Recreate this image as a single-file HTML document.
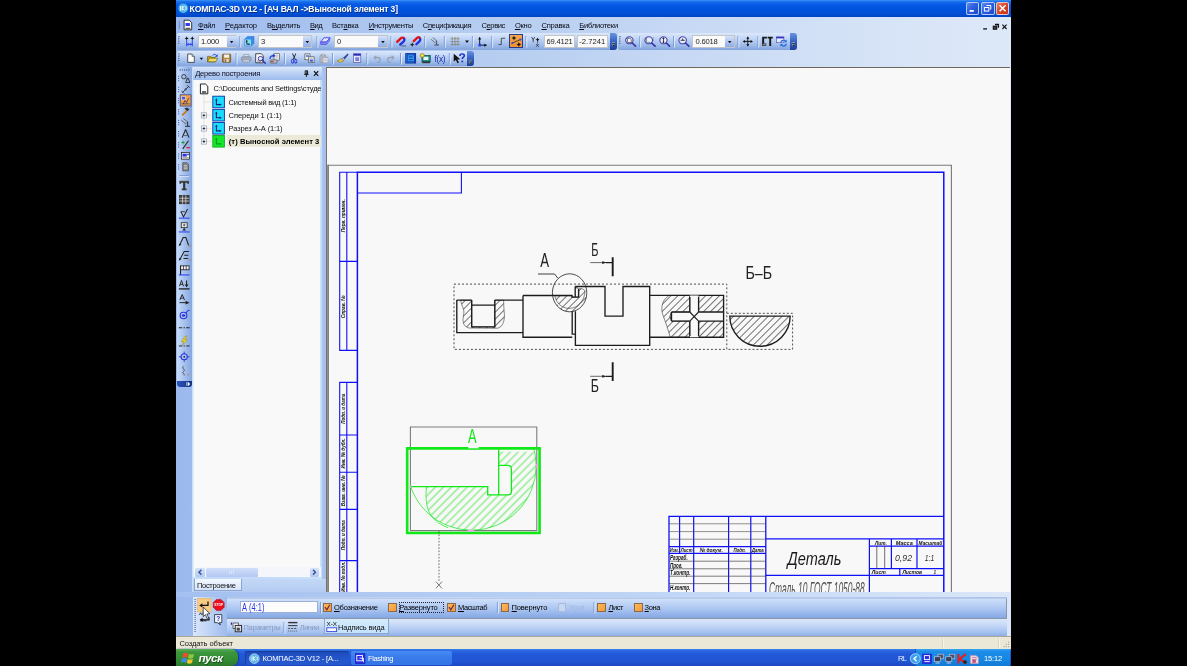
<!DOCTYPE html>
<html lang="ru"><head><meta charset="utf-8"><title>КОМПАС-3D V12</title><style>
html,body{margin:0;padding:0;background:#000;}
body{width:1187px;height:666px;overflow:hidden;position:relative;font-family:'Liberation Sans',sans-serif;}
.t{position:absolute;white-space:pre;font-family:'Liberation Sans',sans-serif;}
.t u{text-decoration:underline;text-decoration-thickness:0.7px;text-underline-offset:0.6px;}
svg text{font-family:'Liberation Sans',sans-serif;}
#win{position:absolute;left:0;top:0;width:1187px;height:666px;overflow:hidden;filter:blur(0.35px);}
</style></head>
<body><div id="win">
<div style="position:absolute;left:175.50px;top:0.00px;width:835.00px;height:666.00px;background:linear-gradient(90deg,#9cb9ee 0%,#a6c1ef 12%,#b4ccf0 35%,#c6d8f4 60%,#d7e4f7 85%,#dde8f8 100%);"></div>
<div style="position:absolute;left:175.50px;top:0.00px;width:835.00px;height:17.00px;background:linear-gradient(180deg,#3b94f8 0%,#1a6eec 10%,#0458e2 28%,#0053dc 55%,#0150d6 80%,#0144c2 100%);"></div>
<svg style="position:absolute;left:178.00px;top:3.00px;overflow:visible;" width="10.50" height="10.50" viewBox="178.00 3.00 10.50 10.50"><circle cx="183.2" cy="8.3" r="5" fill="#4ab4e8" stroke="#1c6fd0" stroke-width="0.6"/><path d="M180.6 6v4.6M182.2 6v4.6M184.4 5.8l-2 2.4 2.2 2.4M186 6.2v4" stroke="#fff" stroke-width="0.9" fill="none"/></svg>
<span class="t" style="left:189.60px;top:3.74px;font-size:8.6px;line-height:10.32px;letter-spacing:-0.119px;color:#fff;font-weight:bold;text-shadow:0.6px 0.6px 0.5px #0a2a80;">КОМПАС-3D V12 - [АЧ ВАЛ -&gt;Выносной элемент 3]</span>
<div style="position:absolute;left:966.20px;top:2.20px;width:13.20px;height:12.60px;background:linear-gradient(135deg,#5b8cf0 0%,#2d5fe0 45%,#1c48c8 100%);border:0.8px solid rgba(235,242,255,0.72);border-radius:2px;box-sizing:border-box;"></div><svg style="position:absolute;left:966.20px;top:2.20px;overflow:visible;" width="13.20" height="12.60" viewBox="966.20 2.20 13.20 12.60"><path d="M969.8000000000001 11.1h4.2" stroke="#fff" stroke-width="1.8"/></svg>
<div style="position:absolute;left:981.40px;top:2.20px;width:13.20px;height:12.60px;background:linear-gradient(135deg,#5b8cf0 0%,#2d5fe0 45%,#1c48c8 100%);border:0.8px solid rgba(235,242,255,0.72);border-radius:2px;box-sizing:border-box;"></div><svg style="position:absolute;left:981.40px;top:2.20px;overflow:visible;" width="13.20" height="12.60" viewBox="981.40 2.20 13.20 12.60"><path d="M986.8 5.7h4.4v3.6h-1" stroke="#fff" stroke-width="1" fill="none"/><rect x="984.8" y="7.7" width="4.4" height="3.6" stroke="#fff" stroke-width="1" fill="none"/></svg>
<div style="position:absolute;left:996.20px;top:2.20px;width:13.20px;height:12.60px;background:linear-gradient(135deg,#e8866a 0%,#d9482a 45%,#c4300f 100%);border:0.8px solid rgba(235,242,255,0.72);border-radius:2px;box-sizing:border-box;"></div><svg style="position:absolute;left:996.20px;top:2.20px;overflow:visible;" width="13.20" height="12.60" viewBox="996.20 2.20 13.20 12.60"><path d="M999.8000000000001 5.5l6 6M1005.8000000000001 5.5l-6 6" stroke="#fff" stroke-width="1.5"/></svg>
<svg style="position:absolute;left:175.50px;top:17.00px;overflow:visible;" width="20.50" height="16.00" viewBox="175.50 17.00 20.50 16.00"><rect x="178.3" y="21.5" width="1" height="1" fill="#3a5a9a"/><rect x="178.3" y="23.5" width="1" height="1" fill="#3a5a9a"/><rect x="178.3" y="25.5" width="1" height="1" fill="#3a5a9a"/><rect x="178.3" y="27.5" width="1" height="1" fill="#3a5a9a"/><path d="M183.6 20.2h5l2.6 2.4v7.2h-7.6z" fill="#fdfdfd" stroke="#222" stroke-width="0.9"/><rect x="185" y="23" width="4.4" height="3" fill="#2c3ff0"/><path d="M185 28.3h4.8" stroke="#333" stroke-width="1"/></svg>
<span class="t" style="left:198.00px;top:20.64px;font-size:7.6px;line-height:9.12px;letter-spacing:-0.393px;color:#0a0a14;"><u>Ф</u>айл</span>
<span class="t" style="left:225.10px;top:20.64px;font-size:7.6px;line-height:9.12px;letter-spacing:-0.100px;color:#0a0a14;"><u>Р</u>едактор</span>
<span class="t" style="left:267.00px;top:20.64px;font-size:7.6px;line-height:9.12px;letter-spacing:-0.243px;color:#0a0a14;">В<u>ы</u>делить</span>
<span class="t" style="left:310.10px;top:20.64px;font-size:7.6px;line-height:9.12px;letter-spacing:-0.550px;color:#0a0a14;"><u>В</u>ид</span>
<span class="t" style="left:331.90px;top:20.64px;font-size:7.6px;line-height:9.12px;letter-spacing:-0.233px;color:#0a0a14;">Вст<u>а</u>вка</span>
<span class="t" style="left:368.80px;top:20.64px;font-size:7.6px;line-height:9.12px;letter-spacing:-0.278px;color:#0a0a14;"><u>И</u>нструменты</span>
<span class="t" style="left:422.80px;top:20.64px;font-size:7.6px;line-height:9.12px;letter-spacing:-0.419px;color:#0a0a14;">С<u>п</u>ецификация</span>
<span class="t" style="left:481.50px;top:20.64px;font-size:7.6px;line-height:9.12px;letter-spacing:-0.436px;color:#0a0a14;">С<u>е</u>рвис</span>
<span class="t" style="left:514.90px;top:20.64px;font-size:7.6px;line-height:9.12px;letter-spacing:-0.264px;color:#0a0a14;"><u>О</u>кно</span>
<span class="t" style="left:541.50px;top:20.64px;font-size:7.6px;line-height:9.12px;letter-spacing:-0.257px;color:#0a0a14;"><u>С</u>правка</span>
<span class="t" style="left:579.30px;top:20.64px;font-size:7.6px;line-height:9.12px;letter-spacing:-0.256px;color:#0a0a14;"><u>Б</u>иблиотеки</span>
<svg style="position:absolute;left:985.00px;top:19.00px;overflow:visible;" width="25.00" height="13.00" viewBox="985.00 19.00 25.00 13.00"><path d="M983.2 28.9h3.8" stroke="#111" stroke-width="1.3"/><path d="M995 24.5h3.400v3.200" stroke="#111" stroke-width="1.300" fill="none"/><rect x="993.300" y="26.200" width="3.400" height="3" fill="#444" stroke="#111" stroke-width="1.100"/><path d="M1002.4 24.6l4.2 4.4M1006.6 24.6l-4.2 4.4" stroke="#111" stroke-width="1.1"/></svg>
<div style="position:absolute;left:176.50px;top:33.40px;width:440.10px;height:16.40px;background:linear-gradient(180deg,#dce8fb 0%,#c3d7f6 30%,#a4c0ec 65%,#83a4dc 100%);border-radius:2px 3px 3px 2px;"></div><div style="position:absolute;left:609.60px;top:33.40px;width:7.00px;height:16.40px;background:linear-gradient(180deg,#6a94e0 0%,#3a66c4 45%,#1c3f9a 100%);border-radius:0 3px 3px 0;"></div><svg style="position:absolute;left:609.60px;top:33.40px;overflow:visible;" width="7.00" height="16.40" viewBox="609.60 33.40 7.00 16.40"><path d="M611.4 43.39999999999999h3.2" stroke="#fff" stroke-width="0.800"/><path d="M611.2 44.8h3.600l-1.800 2.200z" fill="#fff"/><path d="M611.6 43.8h3.200" stroke="#111" stroke-width="0.700"/><path d="M611.8 45.199999999999996h3.000l-1.500 1.900z" fill="#111"/></svg>
<div style="position:absolute;left:617.80px;top:33.40px;width:179.50px;height:16.40px;background:linear-gradient(180deg,#dce8fb 0%,#c3d7f6 30%,#a4c0ec 65%,#83a4dc 100%);border-radius:2px 3px 3px 2px;"></div><div style="position:absolute;left:790.30px;top:33.40px;width:7.00px;height:16.40px;background:linear-gradient(180deg,#6a94e0 0%,#3a66c4 45%,#1c3f9a 100%);border-radius:0 3px 3px 0;"></div><svg style="position:absolute;left:790.30px;top:33.40px;overflow:visible;" width="7.00" height="16.40" viewBox="790.30 33.40 7.00 16.40"><path d="M792.0999999999999 43.39999999999999h3.2" stroke="#fff" stroke-width="0.800"/><path d="M791.9 44.8h3.600l-1.800 2.200z" fill="#fff"/><path d="M792.3 43.8h3.200" stroke="#111" stroke-width="0.700"/><path d="M792.4999999999999 45.199999999999996h3.000l-1.500 1.900z" fill="#111"/></svg>
<div style="position:absolute;left:509.30px;top:34.40px;width:14.20px;height:13.80px;background:linear-gradient(180deg,#f6a84c,#f09a3c 60%,#ee9232);border:0.8px solid #2a3a8a;box-sizing:border-box;"></div>
<svg style="position:absolute;left:176.00px;top:33.00px;overflow:visible;" width="624.00" height="17.00" viewBox="176.00 33.00 624.00 17.00"><rect x="178.40" y="36.20" width="1.300" height="1.300" fill="#27408a"/><rect x="179.10" y="36.90" width="1" height="1" fill="#f4f8ff" opacity="0.800"/><rect x="178.40" y="38.40" width="1.300" height="1.300" fill="#27408a"/><rect x="179.10" y="39.10" width="1" height="1" fill="#f4f8ff" opacity="0.800"/><rect x="178.40" y="40.60" width="1.300" height="1.300" fill="#27408a"/><rect x="179.10" y="41.30" width="1" height="1" fill="#f4f8ff" opacity="0.800"/><rect x="178.40" y="42.80" width="1.300" height="1.300" fill="#27408a"/><rect x="179.10" y="43.50" width="1" height="1" fill="#f4f8ff" opacity="0.800"/><rect x="619.40" y="36.20" width="1.300" height="1.300" fill="#27408a"/><rect x="620.10" y="36.90" width="1" height="1" fill="#f4f8ff" opacity="0.800"/><rect x="619.40" y="38.40" width="1.300" height="1.300" fill="#27408a"/><rect x="620.10" y="39.10" width="1" height="1" fill="#f4f8ff" opacity="0.800"/><rect x="619.40" y="40.60" width="1.300" height="1.300" fill="#27408a"/><rect x="620.10" y="41.30" width="1" height="1" fill="#f4f8ff" opacity="0.800"/><rect x="619.40" y="42.80" width="1.300" height="1.300" fill="#27408a"/><rect x="620.10" y="43.50" width="1" height="1" fill="#f4f8ff" opacity="0.800"/><path d="M239.90 36V47" stroke="#6f8fcf" stroke-width="0.900"/><path d="M240.80 36.6V47.6" stroke="#f2f6fe" stroke-width="0.800"/><path d="M317.00 36V47" stroke="#6f8fcf" stroke-width="0.900"/><path d="M317.90 36.6V47.6" stroke="#f2f6fe" stroke-width="0.800"/><path d="M391.00 36V47" stroke="#6f8fcf" stroke-width="0.900"/><path d="M391.90 36.6V47.6" stroke="#f2f6fe" stroke-width="0.800"/><path d="M424.80 36V47" stroke="#6f8fcf" stroke-width="0.900"/><path d="M425.70 36.6V47.6" stroke="#f2f6fe" stroke-width="0.800"/><path d="M444.40 36V47" stroke="#6f8fcf" stroke-width="0.900"/><path d="M445.30 36.6V47.6" stroke="#f2f6fe" stroke-width="0.800"/><path d="M472.40 36V47" stroke="#6f8fcf" stroke-width="0.900"/><path d="M473.30 36.6V47.6" stroke="#f2f6fe" stroke-width="0.800"/><path d="M491.80 36V47" stroke="#6f8fcf" stroke-width="0.900"/><path d="M492.70 36.6V47.6" stroke="#f2f6fe" stroke-width="0.800"/><path d="M525.90 36V47" stroke="#6f8fcf" stroke-width="0.900"/><path d="M526.80 36.6V47.6" stroke="#f2f6fe" stroke-width="0.800"/><path d="M639.80 36V47" stroke="#6f8fcf" stroke-width="0.900"/><path d="M640.70 36.6V47.6" stroke="#f2f6fe" stroke-width="0.800"/><path d="M673.50 36V47" stroke="#6f8fcf" stroke-width="0.900"/><path d="M674.40 36.6V47.6" stroke="#f2f6fe" stroke-width="0.800"/><path d="M738.00 36V47" stroke="#6f8fcf" stroke-width="0.900"/><path d="M738.90 36.6V47.6" stroke="#f2f6fe" stroke-width="0.800"/><path d="M757.90 36V47" stroke="#6f8fcf" stroke-width="0.900"/><path d="M758.80 36.6V47.6" stroke="#f2f6fe" stroke-width="0.800"/><g transform="translate(184.50 36.20) scale(0.6250 0.6500)"><path d="M3.5 0.0L4.52 2.38L6.9 3.4L4.52 4.42L3.5 6.8L2.48 4.42L0.10000000000000009 3.4L2.48 2.38z" fill="#111"/><path d="M12.5 0.0L13.52 2.38L15.9 3.4L13.52 4.42L12.5 6.8L11.48 4.42L9.1 3.4L11.48 2.38z" fill="#111"/><path d="M3.500 6v9.500M12.500 6v9.500" stroke="#2a3cf0" stroke-width="1.500"/><path d="M3.500 12.500h9" stroke="#2a3cf0" stroke-width="1.500"/><path d="M4 12.500l2.600-2.200v4.400zM12 12.500l-2.600-2.200v4.400z" fill="#2a3cf0"/></g><g transform="translate(244.20 35.80) scale(0.6500 0.6750)"><path d="M1 5l4-4h10v10l-4 4H1z" fill="#3f8ff0" stroke="#2a68d8" stroke-width="0.8"/><path d="M1 5h10v10M11 5l4-4" stroke="#2f6fc4" stroke-width="0.8" fill="none"/><rect x="1.4" y="5.4" width="9.2" height="9.2" fill="#7fe0f0"/><path d="M4 7v5.4h3.4" stroke="#111" stroke-width="1.3" fill="none"/><path d="M2.6 8.6L4 6.2l1.4 2.4zM7 11l2.4 1.4L7 13.8z" fill="#111"/></g><g transform="translate(320.20 36.60) scale(0.6250 0.5750)"><path d="M0.800 9.500l5.200-7.500h9.400l-5.200 7.500z" fill="#e4e6fb" stroke="#3a3ae8" stroke-width="1.400"/><path d="M0.800 9.500v4h9.400l5.200-7.500v-4l-5.200 7.500z" fill="#6a6af0" stroke="#3a3ae8" stroke-width="1.200"/><path d="M0.800 11.500h9.400l5.200-7.500" stroke="#c8c8fa" stroke-width="0.800" fill="none"/></g><g transform="translate(395.60 36.20) scale(0.6750 0.6500)"><path d="M2.200 8.600L8 3a3.200 3.200 0 0 1 4.600 0.400" stroke="#e41414" stroke-width="3.600" stroke-linecap="round" fill="none"/><path d="M12.800 4.400a3.200 3.200 0 0 1-0.600 3.400L6.800 12.800" stroke="#1c34e0" stroke-width="3.600" stroke-linecap="round" fill="none"/><path d="M9 15h6.600" stroke="#333" stroke-width="1.400" stroke-dasharray="1.600 0.700"/></g><g transform="translate(410.40 36.20) scale(0.6500 0.6500)"><path d="M5.200 7.600L10.600 2.400a3.200 3.200 0 0 1 4.200 0.600" stroke="#e41414" stroke-width="3.600" stroke-linecap="round" fill="none"/><path d="M15 4.200a3.200 3.200 0 0 1-0.800 3.400L9.200 12.400" stroke="#1c34e0" stroke-width="3.600" stroke-linecap="round" fill="none"/><path d="M2.8 10.2L3.6399999999999997 12.16L5.6 13L3.6399999999999997 13.84L2.8 15.8L1.96 13.84L0.0 13L1.96 12.16z" fill="#222"/><path d="M2.800 9.800v6.400M-0.400 13h6.400" stroke="#222" stroke-width="0.900"/></g><g transform="translate(430.60 37.00) scale(0.5250 0.5500)"><path d="M0.500 4l8 6.500M4 1l8 6.500" stroke="#555" stroke-width="1.400"/><path d="M11.600 7.500v7M9.800 9.200l1.800-1.700M7 14.600h9" stroke="#333" stroke-width="1.500" fill="none"/></g><g transform="translate(450.60 37.00) scale(0.5625 0.5625)"><path d="M3 0v16M8 0v16M13 0v16M0 3h16M0 8h16M0 13h16" stroke="#7a7250" stroke-width="1.300" stroke-dasharray="2.200 0.800"/></g><path d="M465 40.6h4l-2 2.400z" fill="#111"/><g transform="translate(477.20 36.40) scale(0.6125 0.6250)"><path d="M4 15V2M4 14h11" stroke="#111" stroke-width="1.500" fill="none"/><path d="M1.600 5L4 0.500 6.400 5zM11.500 11.600L16 14l-4.500 2.400z" fill="#111"/><rect x="2" y="11.800" width="4.200" height="4.200" fill="#2a3cf0"/></g><g transform="translate(498.00 37.20) scale(0.4750 0.5250)"><path d="M1 14h6V2h8" stroke="#333" stroke-width="1.600" fill="none"/></g></svg>
<div style="position:absolute;left:197.60px;top:35.30px;width:38.80px;height:12.70px;background:#fafafa;border:0.8px solid #c3c6c8;box-sizing:border-box;"></div><div style="position:absolute;left:226.60px;top:36.10px;width:9.00px;height:11.10px;background:linear-gradient(180deg,#d4e2fa,#a9c2ee 60%,#8daee6);"></div><svg style="position:absolute;left:226.60px;top:35.30px;overflow:visible;" width="9.80" height="12.70" viewBox="226.60 35.30 9.80 12.70"><path d="M229.40 41.25h3.600l-1.800 2.200z" fill="#111"/></svg><span class="t" style="left:201.00px;top:37.29px;font-size:7.6px;line-height:9.12px;letter-spacing:-0.203px;color:#222;">1.000</span>
<div style="position:absolute;left:257.60px;top:35.30px;width:54.20px;height:12.70px;background:#fafafa;border:0.8px solid #c3c6c8;box-sizing:border-box;"></div><div style="position:absolute;left:302.60px;top:36.10px;width:8.40px;height:11.10px;background:linear-gradient(180deg,#d4e2fa,#a9c2ee 60%,#8daee6);"></div><svg style="position:absolute;left:302.60px;top:35.30px;overflow:visible;" width="9.20" height="12.70" viewBox="302.60 35.30 9.20 12.70"><path d="M305.10 41.25h3.600l-1.800 2.200z" fill="#111"/></svg><span class="t" style="left:261.00px;top:37.29px;font-size:7.6px;line-height:9.12px;letter-spacing:-0.234px;color:#222;">3</span>
<div style="position:absolute;left:333.50px;top:35.30px;width:54.50px;height:12.70px;background:#fafafa;border:0.8px solid #c3c6c8;box-sizing:border-box;"></div><div style="position:absolute;left:377.50px;top:36.10px;width:9.70px;height:11.10px;background:linear-gradient(180deg,#d4e2fa,#a9c2ee 60%,#8daee6);"></div><svg style="position:absolute;left:377.50px;top:35.30px;overflow:visible;" width="10.50" height="12.70" viewBox="377.50 35.30 10.50 12.70"><path d="M380.65 41.25h3.600l-1.800 2.200z" fill="#111"/></svg><span class="t" style="left:337.00px;top:37.29px;font-size:7.6px;line-height:9.12px;letter-spacing:-0.234px;color:#222;">0</span>
<div style="position:absolute;left:543.90px;top:35.30px;width:31.00px;height:12.70px;background:#fafafa;border:0.8px solid #c3c6c8;box-sizing:border-box;"></div><span class="t" style="left:546.60px;top:37.29px;font-size:7.6px;line-height:9.12px;letter-spacing:-0.236px;color:#222;">69.4121</span>
<div style="position:absolute;left:576.80px;top:35.30px;width:31.00px;height:12.70px;background:#fafafa;border:0.8px solid #c3c6c8;box-sizing:border-box;"></div><span class="t" style="left:579.20px;top:37.29px;font-size:7.6px;line-height:9.12px;letter-spacing:0.033px;color:#222;">-2.7241</span>
<div style="position:absolute;left:692.00px;top:35.30px;width:42.80px;height:12.70px;background:#fafafa;border:0.8px solid #c3c6c8;box-sizing:border-box;"></div><div style="position:absolute;left:724.80px;top:36.10px;width:9.20px;height:11.10px;background:linear-gradient(180deg,#d4e2fa,#a9c2ee 60%,#8daee6);"></div><svg style="position:absolute;left:724.80px;top:35.30px;overflow:visible;" width="10.00" height="12.70" viewBox="724.80 35.30 10.00 12.70"><path d="M727.70 41.25h3.600l-1.800 2.200z" fill="#111"/></svg><span class="t" style="left:695.40px;top:37.29px;font-size:7.6px;line-height:9.12px;letter-spacing:-0.172px;color:#222;">0.6018</span>
<svg style="position:absolute;left:176.00px;top:33.00px;overflow:visible;" width="624.00" height="17.00" viewBox="176.00 33.00 624.00 17.00"><g transform="translate(510.80 35.60) scale(0.7000 0.7125)"><path d="M4.5 0.10000000000000009L5.52 2.48L7.9 3.5L5.52 4.52L4.5 6.9L3.48 4.52L1.1 3.5L3.48 2.48z" fill="#111"/><path d="M11.5 9.1L12.52 11.48L14.9 12.5L12.52 13.52L11.5 15.9L10.48 13.52L8.1 12.5L10.48 11.48z" fill="#111"/><path d="M1 11L15 5" stroke="#222" stroke-width="1.100"/><circle cx="2.400" cy="10.400" r="1.500" fill="#3a44e8"/><circle cx="13.600" cy="5.600" r="1.500" fill="#3a44e8"/></g><g transform="translate(531.00 36.40) scale(0.6000 0.6500)"><path d="M1 1l2.600 4L6.200 1M3.600 5v4" stroke="#222" stroke-width="1.200" fill="none"/><path d="M11 1.6L12.02 3.98L14.4 5L12.02 6.02L11 8.4L9.98 6.02L7.6 5L9.98 3.98z" fill="#111"/><path d="M11 5v6" stroke="#222" stroke-width="1"/><path d="M8.500 11.500l4.500 4.500M13 11.500l-4.500 4.500" stroke="#222" stroke-width="1.200"/></g><g transform="translate(624.80 36.00) scale(0.7125 0.6750)"><circle cx="6.4" cy="6.4" r="5.2" fill="#e8eef8" stroke="#4a44b0" stroke-width="1.6"/><path d="M4 3.400h3.400l1.600 1.600v4.600H4z" fill="#fff" stroke="#222" stroke-width="0.900"/><path d="M10.4 10.4L15 15" stroke="#3a34a8" stroke-width="2.4" stroke-linecap="round"/></g><g transform="translate(644.00 36.00) scale(0.7375 0.6750)"><circle cx="6.4" cy="6.4" r="5.2" fill="#e8eef8" stroke="#4a44b0" stroke-width="1.6"/><path d="M3.400 3v6.400h5" stroke="#5a8a8a" stroke-width="1.200" fill="none"/><path d="M10.4 10.4L15 15" stroke="#3a34a8" stroke-width="2.4" stroke-linecap="round"/><path d="M13 2v6" stroke="#888" stroke-width="1.200" stroke-dasharray="1.200 1"/></g><g transform="translate(659.00 36.00) scale(0.7000 0.6750)"><circle cx="6.4" cy="6.4" r="5.2" fill="#e8eef8" stroke="#4a44b0" stroke-width="1.6"/><path d="M6.400 2.600v7.600" stroke="#222" stroke-width="1.200"/><path d="M4.600 4.400L6.400 2l1.800 2.400zM4.600 8.400L6.400 10.800l1.800-2.400z" fill="#222"/><path d="M10.4 10.4L15 15" stroke="#3a34a8" stroke-width="2.4" stroke-linecap="round"/></g><g transform="translate(678.00 36.00) scale(0.7250 0.6750)"><circle cx="6.4" cy="6.4" r="5.2" fill="#e8eef8" stroke="#4a44b0" stroke-width="1.6"/><path d="M3.600 6.400h5.600" stroke="#222" stroke-width="1.300"/><path d="M5.200 5.400L6.400 3.400l1.200 2z" fill="#222"/><path d="M10.4 10.4L15 15" stroke="#3a34a8" stroke-width="2.4" stroke-linecap="round"/></g><g transform="translate(742.80 36.40) scale(0.6250 0.6250)"><path d="M8 1v14M1 8h14" stroke="#111" stroke-width="1.500"/><path d="M5.600 3.600L8 0l2.400 3.600zM5.600 12.400L8 16l2.400-3.600zM3.600 5.600L0 8l3.600 2.400zM12.400 5.600L16 8l-3.600 2.400z" fill="#111"/></g><g transform="translate(761.80 36.20) scale(0.6875 0.6500)"><path d="M0.500 1h7v2.400H3.400V15H0.500zM8.500 1H16v2.400h-2.400V15h-2.800V3.400H8.500z" fill="#1a1a1a"/><rect x="0.500" y="11" width="6" height="4" fill="#444"/><path d="M1.500 13h4" stroke="#ddd" stroke-width="0.800"/></g><g transform="translate(776.00 36.20) scale(0.6875 0.6500)"><rect x="0.500" y="1" width="11" height="9" fill="#e8ecfa" stroke="#5a5ac8" stroke-width="1"/><rect x="0.500" y="1" width="11" height="2.400" fill="#3434b8"/><path d="M7 10a4 4 0 0 1 7-2.400" stroke="#1c6ae0" stroke-width="1.800" fill="none"/><path d="M15.600 5.400v4h-4z" fill="#1c6ae0"/><path d="M15 11.400a4 4 0 0 1-7 2.400" stroke="#1c6ae0" stroke-width="1.800" fill="none"/><path d="M6.400 16v-4h4z" fill="#1c6ae0"/></g></svg>
<div style="position:absolute;left:176.50px;top:50.60px;width:297.50px;height:15.80px;background:linear-gradient(180deg,#dce8fb 0%,#c3d7f6 30%,#a4c0ec 65%,#83a4dc 100%);border-radius:2px 3px 3px 2px;"></div><div style="position:absolute;left:467.00px;top:50.60px;width:7.00px;height:15.80px;background:linear-gradient(180deg,#6a94e0 0%,#3a66c4 45%,#1c3f9a 100%);border-radius:0 3px 3px 0;"></div><svg style="position:absolute;left:467.00px;top:50.60px;overflow:visible;" width="7.00" height="15.80" viewBox="467.00 50.60 7.00 15.80"><path d="M468.79999999999995 60.0h3.2" stroke="#fff" stroke-width="0.800"/><path d="M468.59999999999997 61.400000000000006h3.600l-1.800 2.200z" fill="#fff"/><path d="M469.0 60.400000000000006h3.200" stroke="#111" stroke-width="0.700"/><path d="M469.2 61.800000000000004h3.000l-1.500 1.900z" fill="#111"/></svg>
<svg style="position:absolute;left:176.00px;top:50.00px;overflow:visible;" width="304.00" height="17.00" viewBox="176.00 50.00 304.00 17.00"><rect x="178.40" y="53.40" width="1.300" height="1.300" fill="#27408a"/><rect x="179.10" y="54.10" width="1" height="1" fill="#f4f8ff" opacity="0.800"/><rect x="178.40" y="55.60" width="1.300" height="1.300" fill="#27408a"/><rect x="179.10" y="56.30" width="1" height="1" fill="#f4f8ff" opacity="0.800"/><rect x="178.40" y="57.80" width="1.300" height="1.300" fill="#27408a"/><rect x="179.10" y="58.50" width="1" height="1" fill="#f4f8ff" opacity="0.800"/><rect x="178.40" y="60.00" width="1.300" height="1.300" fill="#27408a"/><rect x="179.10" y="60.70" width="1" height="1" fill="#f4f8ff" opacity="0.800"/><path d="M236.10 53V64" stroke="#6f8fcf" stroke-width="0.900"/><path d="M237.00 53.6V64.6" stroke="#f2f6fe" stroke-width="0.800"/><path d="M284.50 53V64" stroke="#6f8fcf" stroke-width="0.900"/><path d="M285.40 53.6V64.6" stroke="#f2f6fe" stroke-width="0.800"/><path d="M332.50 53V64" stroke="#6f8fcf" stroke-width="0.900"/><path d="M333.40 53.6V64.6" stroke="#f2f6fe" stroke-width="0.800"/><path d="M366.90 53V64" stroke="#6f8fcf" stroke-width="0.900"/><path d="M367.80 53.6V64.6" stroke="#f2f6fe" stroke-width="0.800"/><path d="M400.60 53V64" stroke="#6f8fcf" stroke-width="0.900"/><path d="M401.50 53.6V64.6" stroke="#f2f6fe" stroke-width="0.800"/><path d="M449.40 53V64" stroke="#6f8fcf" stroke-width="0.900"/><path d="M450.30 53.6V64.6" stroke="#f2f6fe" stroke-width="0.800"/><g transform="translate(186.60 53.60) scale(0.5500 0.5750)"><path d="M2 0.800h8l4 4V15.200H2z" fill="#fdfdfd" stroke="#222" stroke-width="1.300"/><path d="M10 0.800v4h4" fill="#ddd" stroke="#222" stroke-width="1"/></g><path d="M199.600 57.800h3.600l-1.800 2.200z" fill="#111"/><g transform="translate(207.20 53.40) scale(0.6625 0.6000)"><path d="M0.500 5h5l1.200 1.600H12V14H0.500z" fill="#c8a820" stroke="#5a4a08" stroke-width="0.900"/><path d="M0.500 14l3-6H16l-3.400 6z" fill="#f4dc60" stroke="#5a4a08" stroke-width="0.900"/><path d="M8 3.400c2-2.400 4.600-2.400 6 0" stroke="#1c3cd8" stroke-width="1.500" fill="none"/><path d="M15.600 1v4.400h-4z" fill="#1c3cd8"/></g><g transform="translate(222.00 53.60) scale(0.5750 0.5750)"><rect x="1" y="1" width="14" height="14" rx="1" fill="#b88a3c" stroke="#5a3c10" stroke-width="1.200"/><rect x="3.600" y="1.600" width="8.800" height="5.600" fill="#f4f0e6"/><rect x="4.400" y="9.600" width="7.200" height="5" fill="#e4dccc"/><rect x="5.400" y="10.600" width="2" height="3.400" fill="#5a3c10"/></g><g transform="translate(241.00 53.60) scale(0.6625 0.5875)"><path d="M4 1.500h8v4H4z" fill="#d8dce6" stroke="#8a92a6" stroke-width="1"/><rect x="0.800" y="5.500" width="14.400" height="6.500" rx="1.500" fill="#a6aec0" stroke="#7a8296" stroke-width="1"/><path d="M3 10h10v4.500H3z" fill="#c8ccd8" stroke="#8a92a6" stroke-width="1"/></g><g transform="translate(255.00 53.20) scale(0.6875 0.6375)"><path d="M1 0.800h8l3 3V15H1z" fill="#fdfdfd" stroke="#222" stroke-width="1.200"/><circle cx="8" cy="8.400" r="3.400" fill="#dfe6f8" stroke="#3a34a8" stroke-width="1.400"/><path d="M10.400 11L15 15.600" stroke="#3a34a8" stroke-width="2.200" stroke-linecap="round"/><path d="M3 12.400h6" stroke="#444" stroke-width="1"/></g><g transform="translate(269.20 53.20) scale(0.6875 0.6375)"><rect x="7" y="0.800" width="8.200" height="10" fill="#f4f4f4" stroke="#555" stroke-width="1"/><path d="M9 3.400h4.400M9 5.600h4.400M9 7.800h4.400" stroke="#999" stroke-width="0.800"/><path d="M1 9c0-4 3-5.600 6-5" stroke="#1c3cd8" stroke-width="1.700" fill="none"/><path d="M5.600 1l3.800 3.200-4.400 2z" fill="#1c3cd8"/><rect x="1.500" y="10.500" width="10" height="5" rx="0.800" fill="#b8bcc8" stroke="#555" stroke-width="1"/><rect x="2.600" y="12.400" width="3.400" height="1.600" fill="#e01818"/></g><g transform="translate(290.40 53.20) scale(0.4750 0.6375)"><path d="M4.400 0.400L10.400 10M11.600 0.400L5.600 10" stroke="#222" stroke-width="1.700"/><ellipse cx="4.600" cy="12.800" rx="2.400" ry="2.800" fill="none" stroke="#2a34d8" stroke-width="1.700"/><ellipse cx="11.400" cy="12.800" rx="2.400" ry="2.800" fill="none" stroke="#2a34d8" stroke-width="1.700"/></g><g transform="translate(304.40 53.40) scale(0.6375 0.6125)"><rect x="0.800" y="0.800" width="8" height="9.600" fill="#f4f4f4" stroke="#444" stroke-width="1"/><rect x="2.400" y="2.800" width="4.800" height="3" fill="#5a8ad8"/><rect x="6.800" y="5.600" width="8.400" height="9.600" fill="#f4f4f4" stroke="#444" stroke-width="1"/><rect x="8.400" y="10" width="5" height="3.600" fill="#3a5ad8"/><path d="M8.400 8h5" stroke="#888" stroke-width="0.800"/></g><g transform="translate(319.40 53.40) scale(0.5625 0.6125)"><rect x="1" y="3" width="11" height="12" rx="1" fill="#b4b8c4" stroke="#8a8e9c" stroke-width="1"/><rect x="4" y="1.200" width="5" height="3" fill="#d0d4dc" stroke="#8a8e9c" stroke-width="0.800"/><rect x="6.400" y="7" width="8.800" height="8.400" fill="#e4e6ec" stroke="#9a9eac" stroke-width="1"/><path d="M8 9.600h5.600M8 12h5.600" stroke="#a8acb8" stroke-width="0.900"/></g><g transform="translate(336.80 53.40) scale(0.7125 0.6000)"><path d="M15.500 0.500L9 7.500l2 2L16 2.400z" fill="#2a3ca8" stroke="#1a2470" stroke-width="0.600"/><path d="M9 7.500L6.400 9.200l3 3 1.600-2.700z" fill="#c8ccd8" stroke="#555" stroke-width="0.600"/><path d="M6.400 9.200C4 9.600 3.400 12 0.400 12.600c2 2.600 7 2.600 9-0.400z" fill="#f0d040" stroke="#6a5a10" stroke-width="0.800"/></g><g transform="translate(352.80 53.20) scale(0.5500 0.6250)"><rect x="1.500" y="1" width="13" height="14" fill="#eef0fa" stroke="#4a4a9a" stroke-width="1.100"/><rect x="1.500" y="1" width="13" height="3" fill="#2a2ab8"/><path d="M4 6.600h8M4 9h8M4 11.400h8" stroke="#6a6ad0" stroke-width="1.100"/><rect x="5" y="7.600" width="6" height="5" fill="#3a44e0" opacity="0.550"/></g><g transform="translate(373.00 54.00) scale(0.5375 0.5500)"><path d="M3 6.400h6a4.400 4.400 0 0 1 0 8.800H7.400" stroke="#9aa2b8" stroke-width="2.400" fill="none"/><path d="M0.500 6.400L6 1.600v9.600z" fill="#9aa2b8"/></g><g transform="translate(386.20 54.00) scale(0.5500 0.5500)"><path d="M13 6.400H7a4.400 4.400 0 0 0 0 8.800h1.600" stroke="#9aa2b8" stroke-width="2.400" fill="none"/><path d="M15.500 6.400L10 1.600v9.600z" fill="#9aa2b8"/></g><g transform="translate(405.20 53.00) scale(0.6875 0.6625)"><rect x="0.800" y="0.800" width="14.400" height="14.400" fill="#1e6ee0" stroke="#0a2a90" stroke-width="1.200"/><rect x="3" y="3" width="10" height="10" fill="#3aa0f4" stroke="#0a2a90" stroke-width="0.700"/><path d="M5 6h6M5 10h6" stroke="#0a2a90" stroke-width="1.400"/><path d="M13 0.800l2.200 2.200v12.200H13z" fill="#0a3ab0"/></g><g transform="translate(419.40 53.00) scale(0.7125 0.6625)"><rect x="3.600" y="3.600" width="11.600" height="9.600" fill="#1e8a8a" stroke="#0a4a4a" stroke-width="1"/><rect x="5.600" y="5.600" width="7" height="5" fill="#e8f4f8"/><path d="M4 13.200h11v2.200H4z" fill="#333"/><circle cx="4" cy="3.600" r="2.800" fill="#f4e040" stroke="#6a5a10" stroke-width="0.800"/><path d="M2.800 6.200h2.400v2H2.800z" fill="#8a7a20"/></g><g transform="translate(453.00 53.00) scale(0.7250 0.6625)"><path d="M1 1v12l3-2.600 2.200 5 2-0.900-2.200-4.800 4-0.300z" fill="#111"/><path d="M9.600 4.400c0-4 6-4 6-0.400 0 2.400-2.800 2.400-2.800 5" stroke="#1c2cc8" stroke-width="2.200" fill="none"/><rect x="11.600" y="11.600" width="2.400" height="2.400" fill="#1c2cc8"/></g></svg>
<span class="t" style="left:434.60px;top:53.56px;font-size:8.4px;line-height:10.08px;letter-spacing:-0.373px;color:#1c2ca8;">f(x)</span>
<div style="position:absolute;left:176.50px;top:67.40px;width:15.10px;height:319.80px;background:linear-gradient(90deg,#c9dbf8 0%,#a9c3ee 45%,#86a6de 100%);border-radius:2px 2px 3px 3px;"></div>
<div style="position:absolute;left:176.50px;top:380.60px;width:15.10px;height:6.60px;background:linear-gradient(90deg,#2a56b8 0%,#1c3f9a 60%,#16347e 100%);border-radius:0 0 3px 3px;"></div>
<svg style="position:absolute;left:176.00px;top:67.00px;overflow:visible;" width="16.00" height="321.00" viewBox="176.00 67.00 16.00 321.00"><rect x="179.60" y="69.400" width="1.100" height="1.100" fill="#2c4a92"/><rect x="181.80" y="69.400" width="1.100" height="1.100" fill="#2c4a92"/><rect x="184.00" y="69.400" width="1.100" height="1.100" fill="#2c4a92"/><rect x="186.20" y="69.400" width="1.100" height="1.100" fill="#2c4a92"/><rect x="188.40" y="69.400" width="1.100" height="1.100" fill="#2c4a92"/><rect x="178.100" y="75.80" width="1" height="1" fill="#3a5aa6"/><rect x="178.100" y="78.00" width="1" height="1" fill="#3a5aa6"/><rect x="178.100" y="80.20" width="1" height="1" fill="#3a5aa6"/><g transform="translate(181.00 73.80) scale(0.5750 0.5750)"><circle cx="5" cy="5" r="3.800" fill="none" stroke="#222" stroke-width="1.400"/><path d="M8 15l4-8 3.600 8z" fill="none" stroke="#222" stroke-width="1.400"/><circle cx="10" cy="9" r="1.400" fill="#555"/></g><rect x="178.100" y="86.80" width="1" height="1" fill="#3a5aa6"/><rect x="178.100" y="89.00" width="1" height="1" fill="#3a5aa6"/><rect x="178.100" y="91.20" width="1" height="1" fill="#3a5aa6"/><g transform="translate(181.00 84.80) scale(0.5750 0.5750)"><path d="M2 14L14 2" stroke="#333" stroke-width="1.600"/><path d="M0.600 10.400l5 5M10.400 0.600l5 5" stroke="#333" stroke-width="1.300"/><circle cx="8" cy="8" r="1.800" fill="#446"/></g><rect x="178.100" y="97.80" width="1" height="1" fill="#3a5aa6"/><rect x="178.100" y="100.00" width="1" height="1" fill="#3a5aa6"/><rect x="178.100" y="102.20" width="1" height="1" fill="#3a5aa6"/><rect x="180.200" y="94.80000000000001" width="10.800" height="11.200" fill="#f0a040" stroke="#2a3a8a" stroke-width="0.700"/><g transform="translate(181.00 95.80) scale(0.5750 0.5750)"><rect x="1.400" y="1" width="6" height="6" fill="#4a54e8" stroke="#fff" stroke-width="0.800"/><path d="M1 14h14M4 14l3-6 2.600 4 4-8" stroke="#2a2a6a" stroke-width="1.300" fill="none"/></g><rect x="178.100" y="109.10" width="1" height="1" fill="#3a5aa6"/><rect x="178.100" y="111.30" width="1" height="1" fill="#3a5aa6"/><rect x="178.100" y="113.50" width="1" height="1" fill="#3a5aa6"/><g transform="translate(181.00 107.10) scale(0.5750 0.5750)"><path d="M2 14.500L10 6.500" stroke="#c87818" stroke-width="3"/><path d="M6 2.500c3-2 6-1.500 8.500 1.500l-3 3.400L8.600 5z" fill="#333"/></g><rect x="178.100" y="119.90" width="1" height="1" fill="#3a5aa6"/><rect x="178.100" y="122.10" width="1" height="1" fill="#3a5aa6"/><rect x="178.100" y="124.30" width="1" height="1" fill="#3a5aa6"/><g transform="translate(181.00 117.90) scale(0.5750 0.5750)"><path d="M0.500 4l8 6.500M4 1l8 6.500" stroke="#555" stroke-width="1.500"/><path d="M11.600 7.500v7M9.800 9.200l1.800-1.700M7 14.600h9" stroke="#222" stroke-width="1.600" fill="none"/></g><rect x="178.100" y="131.00" width="1" height="1" fill="#3a5aa6"/><rect x="178.100" y="133.20" width="1" height="1" fill="#3a5aa6"/><rect x="178.100" y="135.40" width="1" height="1" fill="#3a5aa6"/><g transform="translate(181.00 129.00) scale(0.5750 0.5750)"><path d="M8 1L2 15M8 1l6 14" stroke="#222" stroke-width="1.800" fill="none"/><path d="M4.400 10.400c2.400 1.600 4.800 1.600 7.200 0" stroke="#222" stroke-width="1.200" fill="none"/></g><rect x="178.100" y="142.20" width="1" height="1" fill="#3a5aa6"/><rect x="178.100" y="144.40" width="1" height="1" fill="#3a5aa6"/><rect x="178.100" y="146.60" width="1" height="1" fill="#3a5aa6"/><g transform="translate(181.00 140.20) scale(0.5750 0.5750)"><path d="M3 15L13 1" stroke="#222" stroke-width="1.800"/><path d="M0.600 4h6M3.600 1v6" stroke="#18a838" stroke-width="1.800"/><path d="M9.400 13h6" stroke="#e01818" stroke-width="2"/></g><rect x="178.100" y="153.40" width="1" height="1" fill="#3a5aa6"/><rect x="178.100" y="155.60" width="1" height="1" fill="#3a5aa6"/><rect x="178.100" y="157.80" width="1" height="1" fill="#3a5aa6"/><g transform="translate(181.00 151.40) scale(0.5750 0.5750)"><rect x="1" y="2" width="14" height="11.500" fill="#f2f2f2" stroke="#222" stroke-width="1.300"/><rect x="2.600" y="4" width="7.400" height="5" fill="#2838e0"/><rect x="10.800" y="4" width="2.800" height="2.600" fill="#2838e0"/><path d="M2.600 11h10.800" stroke="#555" stroke-width="1"/></g><rect x="178.100" y="164.20" width="1" height="1" fill="#3a5aa6"/><rect x="178.100" y="166.40" width="1" height="1" fill="#3a5aa6"/><rect x="178.100" y="168.60" width="1" height="1" fill="#3a5aa6"/><g transform="translate(181.00 162.20) scale(0.5750 0.5750)"><path d="M3 1h7l3 3v11H3z" fill="#8a8a8a" stroke="#333" stroke-width="1"/><path d="M5 6h6M5 8.600h6M5 11.200h6" stroke="#ddd" stroke-width="1"/></g><path d="M179.500 175.600h9.600" stroke="#6f8fcf" stroke-width="0.900"/><path d="M179.500 176.400h9.600" stroke="#f2f6fe" stroke-width="0.700"/><g transform="translate(178.80 180.40) scale(0.6750 0.6500)"><path d="M1 1h14v4h-2.400V3.600h-3v9h2V15H4.400v-2.400h2v-9h-3V5H1z" fill="#333"/><path d="M1 1h14" stroke="#777" stroke-width="1"/></g><g transform="translate(178.80 194.40) scale(0.6750 0.6500)"><rect x="0.800" y="1.600" width="14.400" height="12.800" fill="#444" stroke="#222" stroke-width="1"/><path d="M0.800 6h14.400M0.800 10.200h14.400M5.600 1.600v12.800M10.400 1.600v12.800" stroke="#e8e8e8" stroke-width="1"/></g><g transform="translate(178.80 208.40) scale(0.6750 0.6500)"><path d="M3 5l4 8 6-12" stroke="#222" stroke-width="1.500" fill="none"/><path d="M3 5h6" stroke="#222" stroke-width="1.200"/><path d="M0 15h16" stroke="#2a3cf0" stroke-width="1.600"/></g><g transform="translate(178.80 222.20) scale(0.6750 0.6500)"><rect x="3.600" y="0.800" width="8.800" height="7.600" fill="#f0f0f0" stroke="#222" stroke-width="1.200"/><path d="M8 2.400v4M6 4.400h4" stroke="#222" stroke-width="1"/><path d="M8 8.400v4" stroke="#222" stroke-width="1.300"/><path d="M5 12.600h6L8 9.600z" fill="#222"/><path d="M0 15h16" stroke="#2a3cf0" stroke-width="1.600"/></g><g transform="translate(178.80 236.30) scale(0.6750 0.6500)"><path d="M1 14L6.500 2h4l4 12" stroke="#222" stroke-width="1.600" fill="none"/><path d="M0 15.400l1-4.400 3 1.600z" fill="#222"/></g><g transform="translate(178.80 250.30) scale(0.6750 0.6500)"><path d="M1 15L8 2h7M8 7.500h6M7 12.600h7" stroke="#222" stroke-width="1.500" fill="none"/><path d="M0 16l1-4.400 3 1.600z" fill="#222"/></g><g transform="translate(178.80 265.20) scale(0.6750 0.6500)"><rect x="2.600" y="1" width="12.600" height="6" fill="#f4f4f4" stroke="#222" stroke-width="1.300"/><path d="M7 1v6M11 1v6" stroke="#222" stroke-width="1.100"/><path d="M2.600 1v14" stroke="#222" stroke-width="1.600"/><path d="M0 15h16" stroke="#2a3cf0" stroke-width="1.600"/></g><g transform="translate(178.80 279.80) scale(0.6750 0.6500)"><path d="M1 10L4 1l3 9M2 7h4" stroke="#222" stroke-width="1.400" fill="none"/><path d="M11.500 1v9" stroke="#222" stroke-width="1.600"/><path d="M8.600 7.400l2.900 4 2.900-4z" fill="#222"/><path d="M0 14h16" stroke="#222" stroke-width="2"/></g><g transform="translate(178.80 294.20) scale(0.6750 0.6500)"><path d="M1.500 9L5 0.500 8.500 9M2.800 6h4.400" stroke="#222" stroke-width="1.400" fill="none"/><path d="M1 13h10" stroke="#222" stroke-width="1.500"/><path d="M10 10l6 3-6 3z" fill="#222"/></g><g transform="translate(178.80 309.00) scale(0.6750 0.6500)"><circle cx="7" cy="10" r="5" fill="none" stroke="#2a34e0" stroke-width="1.700"/><ellipse cx="7" cy="10" rx="2.600" ry="1.800" fill="#2a34e0"/><path d="M11 6c1-3 3-4 5-4" stroke="#2a34e0" stroke-width="1.500" fill="none"/></g><g transform="translate(178.80 322.60) scale(0.6750 0.6500)"><path d="M0 8h5M7 8h2M11 8h5" stroke="#222" stroke-width="1.500"/></g><g transform="translate(178.80 336.20) scale(0.6750 0.6500)"><path d="M9.600 0L4 8h3.600L5 14l7.600-8.600H8.600L12 0z" fill="#f0e020" stroke="#8a7a00" stroke-width="0.700"/><path d="M0 15h5M7 15h2M11 15h5" stroke="#222" stroke-width="1.400"/></g><g transform="translate(178.80 351.60) scale(0.6750 0.6500)"><circle cx="8" cy="8" r="4.600" fill="none" stroke="#2a34e0" stroke-width="1.600"/><circle cx="8" cy="8" r="1.300" fill="#222"/><path d="M8 0v4M8 12v4M0 8h4M12 8h4" stroke="#2a34e0" stroke-width="1.300"/></g><g transform="translate(178.80 365.60) scale(0.6750 0.6500)"><path d="M7 1c-4 3 4 5 0 8s3 4 1 6" stroke="#444" stroke-width="1.400" fill="none"/><path d="M12 15l3-3v3z" fill="#c87838"/></g><path d="M190.600 246.7l-2 0 2-2z" fill="#c87838"/><path d="M190.600 260.7l-2 0 2-2z" fill="#c87838"/><path d="M186.600 382.200v3.600M188 382.200l1.800 1.800-1.800 1.800z" stroke="#fff" stroke-width="0.600" fill="#fff"/></svg>
<div style="position:absolute;left:192.20px;top:67.40px;width:133.60px;height:525.00px;background:linear-gradient(90deg,#c6e2f8 0%,#c3daf8 3%,#c3daf8 50%,#c9e2f8 96.5%,#a9c1f0 97.5%,#a6beee 100%);"></div>
<div style="position:absolute;left:192.60px;top:67.40px;width:129.00px;height:12.40px;background:linear-gradient(180deg,#dbe7fb 0%,#bcd2f4 45%,#9dbbec 100%);"></div>
<span class="t" style="left:195.20px;top:69.24px;font-size:7.6px;line-height:9.12px;letter-spacing:-0.232px;color:#0a0a20;">Дерево построения</span>
<svg style="position:absolute;left:300.00px;top:68.00px;overflow:visible;" width="22.00" height="12.00" viewBox="300.00 68.00 22.00 12.00"><path d="M305.200 70.800h2.400v3.400h-2.400zM304.200 74.400h4.400M306.400 74.400v2.600" stroke="#111" stroke-width="0.900" fill="none"/><rect x="306.400" y="70.800" width="1.200" height="3.400" fill="#111"/><path d="M314 71.200l4.200 4.600M318.200 71.200l-4.200 4.600" stroke="#111" stroke-width="1.200"/></svg>
<div style="position:absolute;left:193.40px;top:80.40px;width:126.60px;height:497.00px;background:linear-gradient(90deg,#d4ecfa 0,#f9f9f9 1.600px,#f9f9f9 100%);"></div>
<div style="position:absolute;left:227.20px;top:134.60px;width:94.00px;height:12.60px;background:#ece9d8;"></div>
<svg style="position:absolute;left:195.00px;top:82.00px;overflow:visible;" width="31.00" height="66.00" viewBox="195.00 82.00 31.00 66.00"><path d="M200.400 84h5l2.400 2.200v7.600h-7.400z" fill="#fdfdfd" stroke="#222" stroke-width="1"/><path d="M202 92h4.200" stroke="#444" stroke-width="1.600"/><path d="M203.900 95v46.500M203.900 102h8.500M203.900 115.200h8.500M203.900 128.300h8.500M203.900 141.400h8.500" stroke="#c8c4b4" stroke-width="0.800" stroke-dasharray="0.800 0.800" fill="none"/><rect x="212.800" y="96.20" width="11.600" height="11.600" fill="#18dcf8" stroke="#1030a8" stroke-width="0.900"/><path d="M216.400 98.80v5.800h3.600" stroke="#102080" stroke-width="1.100" fill="none"/><path d="M215.200 100.60l1.200-2.200 1.200 2.200zM219.600 103.40l2.200 1.200-2.200 1.200z" fill="#102080"/><rect x="212.800" y="109.40" width="11.600" height="11.600" fill="#18dcf8" stroke="#1030a8" stroke-width="0.900"/><path d="M216.400 112.00v5.800h3.600" stroke="#102080" stroke-width="1.100" fill="none"/><path d="M215.200 113.80l1.200-2.200 1.200 2.200zM219.600 116.60l2.200 1.200-2.200 1.200z" fill="#102080"/><rect x="212.800" y="122.50" width="11.600" height="11.600" fill="#18dcf8" stroke="#1030a8" stroke-width="0.900"/><path d="M216.400 125.10v5.800h3.600" stroke="#102080" stroke-width="1.100" fill="none"/><path d="M215.200 126.90l1.200-2.200 1.200 2.200zM219.600 129.70l2.200 1.200-2.200 1.200z" fill="#102080"/><rect x="212.800" y="135.50" width="11.600" height="11.600" fill="#10e828" stroke="#18a828" stroke-width="0.900"/><path d="M216.400 138.10v5.800h3.600" stroke="#0a9a20" stroke-width="1.100" fill="none"/><path d="M215.200 139.90l1.200-2.200 1.200 2.200zM219.600 142.70l2.200 1.200-2.200 1.200z" fill="#0a9a20"/><rect x="201.300" y="112.80" width="5.200" height="5.200" fill="#fbfbfb" stroke="#8a9ab8" stroke-width="0.700"/><path d="M202.500 115.40h2.800M203.900 114.00v2.800" stroke="#111" stroke-width="0.800"/><rect x="201.300" y="125.90" width="5.200" height="5.200" fill="#fbfbfb" stroke="#8a9ab8" stroke-width="0.700"/><path d="M202.500 128.50h2.800M203.900 127.10v2.800" stroke="#111" stroke-width="0.800"/><rect x="201.300" y="138.90" width="5.200" height="5.200" fill="#fbfbfb" stroke="#8a9ab8" stroke-width="0.700"/><path d="M202.500 141.50h2.800M203.900 140.10v2.800" stroke="#111" stroke-width="0.800"/></svg>
<span class="t" style="left:213.40px;top:84.10px;font-size:7.5px;line-height:9.0px;letter-spacing:-0.152px;color:#111;">C:\Documents and Settings\студе</span>
<span class="t" style="left:228.60px;top:97.50px;font-size:7.5px;line-height:9.0px;letter-spacing:-0.216px;color:#111;">Системный вид (1:1)</span>
<span class="t" style="left:228.60px;top:110.70px;font-size:7.5px;line-height:9.0px;letter-spacing:-0.064px;color:#111;">Спереди 1 (1:1)</span>
<span class="t" style="left:228.60px;top:123.80px;font-size:7.5px;line-height:9.0px;letter-spacing:-0.138px;color:#111;">Разрез А-А (1:1)</span>
<span class="t" style="left:228.80px;top:136.74px;font-size:7.6px;line-height:9.12px;letter-spacing:0.048px;color:#000;font-weight:bold;">(т) Выносной элемент 3</span>
<div style="position:absolute;left:194.80px;top:567.20px;width:126.40px;height:10.00px;background:#f4f6fb;"></div>
<div style="position:absolute;left:195.40px;top:567.60px;width:9.40px;height:9.20px;background:linear-gradient(180deg,#d4e2fb,#b4c9f2);border-radius:1.5px;"></div>
<div style="position:absolute;left:309.60px;top:567.60px;width:9.60px;height:9.20px;background:linear-gradient(180deg,#d4e2fb,#b4c9f2);border-radius:1.5px;"></div>
<div style="position:absolute;left:206.20px;top:567.60px;width:51.80px;height:9.20px;background:linear-gradient(180deg,#d0defa,#b3c8f2);border-radius:1.5px;"></div>
<svg style="position:absolute;left:195.00px;top:567.00px;overflow:visible;" width="125.00" height="10.00" viewBox="195.00 567.00 125.00 10.00"><path d="M201.400 569.800l-2.400 2.400 2.400 2.400M313 569.800l2.400 2.400-2.400 2.400" stroke="#3a5a9a" stroke-width="1.500" fill="none"/><path d="M229.500 570.600v3.400M231.500 570.600v3.400M233.500 570.600v3.400" stroke="#e4ecfc" stroke-width="0.700"/></svg>
<div style="position:absolute;left:193.00px;top:578.60px;width:133.20px;height:13.80px;background:linear-gradient(180deg,#c3d8f6,#b4ccf2);"></div>
<div style="position:absolute;left:194.20px;top:578.60px;width:47.60px;height:12.60px;background:linear-gradient(180deg,#f4f8fe,#d6e4fa);border:0.7px solid #8ea5cf;border-top:none;box-sizing:border-box;"></div>
<span class="t" style="left:197.00px;top:580.90px;font-size:7.5px;line-height:9.0px;letter-spacing:-0.317px;color:#111;">Построение</span>
<div style="position:absolute;left:325.80px;top:67.20px;width:684.70px;height:525.00px;background:#f8f8f8;overflow:hidden;"><svg style="position:absolute;left:0;top:0" width="684.70" height="525.00" viewBox="325.8 67.2 684.70 525.00"><path d="M328 600V165.500H951.200V600" fill="none" stroke="#787878" stroke-width="1.100"/><path d="M327.800 600V165" stroke="#7c7c7c" stroke-width="1.500"/><path d="M357.200 600V172.400H943.600V600" fill="none" stroke="#1010f8" stroke-width="1.500"/><path d="M357.200 193.200H461.200V172.400" fill="none" stroke="#1010f8" stroke-width="1.100"/><path d="M357.200 172.400H339.500V350.600H357.200M346.600 172.400V350.600M339.500 261.600H357.200" fill="none" stroke="#1010f8" stroke-width="1.100"/><path d="M357.200 382.600H339.500V600M346.600 382.600V600M339.500 435.200H357.200M339.500 472.400H357.200M339.500 509.600H357.200M339.500 560.800H357.200" fill="none" stroke="#1010f8" stroke-width="1.100"/><text transform="translate(344.8 216) rotate(-90)" text-anchor="middle" font-size="6" font-style="italic" font-weight="bold" textLength="33" lengthAdjust="spacingAndGlyphs" fill="#111">Перв. примен.</text><text transform="translate(344.8 307) rotate(-90)" text-anchor="middle" font-size="6" font-style="italic" font-weight="bold" textLength="23" lengthAdjust="spacingAndGlyphs" fill="#111">Справ. №</text><text transform="translate(344.8 409) rotate(-90)" text-anchor="middle" font-size="6" font-style="italic" font-weight="bold" textLength="30" lengthAdjust="spacingAndGlyphs" fill="#111">Подп. и дата</text><text transform="translate(344.8 453.6) rotate(-90)" text-anchor="middle" font-size="6" font-style="italic" font-weight="bold" textLength="30" lengthAdjust="spacingAndGlyphs" fill="#111">Инв. № дубл.</text><text transform="translate(344.8 491) rotate(-90)" text-anchor="middle" font-size="6" font-style="italic" font-weight="bold" textLength="31" lengthAdjust="spacingAndGlyphs" fill="#111">Взам. инв. №</text><text transform="translate(344.8 535.4) rotate(-90)" text-anchor="middle" font-size="6" font-style="italic" font-weight="bold" textLength="30" lengthAdjust="spacingAndGlyphs" fill="#111">Подп. и дата</text><text transform="translate(344.8 577) rotate(-90)" text-anchor="middle" font-size="6" font-style="italic" font-weight="bold" textLength="30" lengthAdjust="spacingAndGlyphs" fill="#111">Инв. № подл.</text><path d="M668.800 600V516.500H943.600" fill="none" stroke="#1010f8" stroke-width="1.300"/><path d="M679.4 516.5V553.5" stroke="#1010f8" stroke-width="1.200"/><path d="M693.5 516.5V600" stroke="#1010f8" stroke-width="1.200"/><path d="M728.4 516.5V600" stroke="#1010f8" stroke-width="1.200"/><path d="M750.6 516.5V600" stroke="#1010f8" stroke-width="1.200"/><path d="M765.600 516.500V600" stroke="#1010f8" stroke-width="1.300"/><path d="M668.800 524H765.600" stroke="#4a4a4a" stroke-width="0.600"/><path d="M668.800 531.8H765.600" stroke="#4a4a4a" stroke-width="0.600"/><path d="M668.800 539.4H765.600" stroke="#4a4a4a" stroke-width="0.600"/><path d="M668.800 546.9H765.600" stroke="#1010f8" stroke-width="1.200"/><path d="M668.800 553.5H765.600" stroke="#1010f8" stroke-width="1.200"/><path d="M668.800 561.4H765.600" stroke="#3a3a3a" stroke-width="0.650"/><path d="M668.800 569H765.600" stroke="#3a3a3a" stroke-width="0.650"/><path d="M668.800 576.4H765.600" stroke="#3a3a3a" stroke-width="0.650"/><path d="M668.800 583.8H765.600" stroke="#3a3a3a" stroke-width="0.650"/><path d="M765.600 539H943.600M765.600 575.600H943.600M869.200 539V600M869.200 546.300H943.600M869.200 568.800H943.600M891.200 539V568.800M916.800 539V568.800M899.600 568.800V575.600" fill="none" stroke="#1010f8" stroke-width="1.200"/><path d="M876.600 546.300V568.800M884.500 546.300V568.800" stroke="#333" stroke-width="0.700"/><text x="669.6" y="552.4" font-size="6.2" font-style="italic" font-weight="bold" textLength="9.0" lengthAdjust="spacingAndGlyphs" fill="#111">Изм.</text><text x="680.6" y="552.4" font-size="6.2" font-style="italic" font-weight="bold" textLength="11.8" lengthAdjust="spacingAndGlyphs" fill="#111">Лист</text><text x="699.4" y="552.4" font-size="6.2" font-style="italic" font-weight="bold" textLength="23.2" lengthAdjust="spacingAndGlyphs" fill="#111">№ докум.</text><text x="733.2" y="552.4" font-size="6.2" font-style="italic" font-weight="bold" textLength="12.4" lengthAdjust="spacingAndGlyphs" fill="#111">Подп.</text><text x="751.6" y="552.4" font-size="6.2" font-style="italic" font-weight="bold" textLength="12.0" lengthAdjust="spacingAndGlyphs" fill="#111">Дата</text><text x="669.8" y="560.2" font-size="7" font-style="italic" font-weight="bold" textLength="17.8" lengthAdjust="spacingAndGlyphs" fill="#111">Разраб.</text><text x="669.8" y="567.8" font-size="7" font-style="italic" font-weight="bold" textLength="12.6" lengthAdjust="spacingAndGlyphs" fill="#111">Пров.</text><text x="669.8" y="575.2" font-size="7" font-style="italic" font-weight="bold" textLength="20.4" lengthAdjust="spacingAndGlyphs" fill="#111">Т.контр.</text><text x="669.8" y="590.2" font-size="7" font-style="italic" font-weight="bold" textLength="20.4" lengthAdjust="spacingAndGlyphs" fill="#111">Н.контр.</text><text x="787.4" y="564.8" font-size="19.2" font-style="italic" font-weight="normal" textLength="53.8" lengthAdjust="spacingAndGlyphs" fill="#1a1a1a">Деталь</text><text x="768.8" y="595.4" font-size="17.6" font-style="italic" font-weight="normal" textLength="95.6" lengthAdjust="spacingAndGlyphs" fill="#505050">Сталь 10  ГОСТ 1050-88</text><text x="874.8" y="545" font-size="6.2" font-style="italic" font-weight="bold" textLength="11.8" lengthAdjust="spacingAndGlyphs" fill="#111">Лит.</text><text x="895.6" y="545" font-size="6.2" font-style="italic" font-weight="bold" textLength="17.0" lengthAdjust="spacingAndGlyphs" fill="#111">Масса</text><text x="918.4" y="545" font-size="6.2" font-style="italic" font-weight="bold" textLength="23.6" lengthAdjust="spacingAndGlyphs" fill="#111">Масштаб</text><text x="894.8" y="561.4" font-size="8.8" font-style="italic" font-weight="normal" textLength="17.0" lengthAdjust="spacingAndGlyphs" fill="#333">0,92</text><text x="924.6" y="561.2" font-size="8.8" font-style="italic" font-weight="normal" textLength="9.4" lengthAdjust="spacingAndGlyphs" fill="#333">1:1</text><text x="871.6" y="574.6" font-size="6.2" font-style="italic" font-weight="bold" textLength="14.0" lengthAdjust="spacingAndGlyphs" fill="#111">Лист</text><text x="902.2" y="574.6" font-size="6.2" font-style="italic" font-weight="bold" textLength="19.6" lengthAdjust="spacingAndGlyphs" fill="#111">Листов</text><text x="933.6" y="574.6" font-size="6.2" font-style="italic" font-weight="bold" textLength="2.2" lengthAdjust="spacingAndGlyphs" fill="#111">1</text><path d="M453.800 284.300H726.600V349.600H453.800z" stroke="#3c3c3c" stroke-width="0.900" stroke-dasharray="2 2" fill="none"/><path d="M726.600 313.500H792.400V349.600H726.600" stroke="#3c3c3c" stroke-width="0.900" stroke-dasharray="2 2" fill="none"/><defs><pattern id="hk" width="4.900" height="4.900" patternUnits="userSpaceOnUse" patternTransform="rotate(-45)"><path d="M0 2.450H4.900" stroke="#2a2a2a" stroke-width="0.650"/></pattern><pattern id="hg" width="5.600" height="5.600" patternUnits="userSpaceOnUse" patternTransform="rotate(-45)"><path d="M0 2.800H5.600" stroke="#22e022" stroke-width="0.700"/></pattern><clipPath id="cdet"><circle cx="471.500" cy="466" r="64.500"/></clipPath></defs><path d="M460.400 300.500C461.600 307 464.600 309 463.400 315C462 322 463 327 469 328.200L497.500 328.400C503 327 505 320 504 312C503.400 306 503.600 303 503.400 300.500H494.600V327.100H471.500V300.500z" fill="url(#hk)" stroke="#2a2a2a" stroke-width="0.550"/><path d="M668.800 295.600C661 301 660.400 309 663 316C666 324 668 330 670 337.500H689.600V321.300H671.300V312.200H689.600V295.600z" fill="url(#hk)" stroke="#2a2a2a" stroke-width="0.550"/><path d="M698.400 295.600H723.400V312.200H698.400zM698.400 321.300H723.400V337.500H698.400z" fill="url(#hk)"/><path d="M555 296C556 303 562 308.500 569 308.500C578 308.500 585 300 584.600 290C586.600 296 586.500 303 581 308.500C575 314 565 313.500 559 308C555.500 304.500 553.500 300 553 296z" fill="none"/><path d="M554.600 295.900H571.800V297.300H578.400V289.500C579.600 288.400 582 288.400 584.600 290.500C585.200 300 578 308.600 569 308.600C561.600 308.600 555.800 303 554.600 295.900z" fill="url(#hk)" stroke="#2a2a2a" stroke-width="0.550"/><path d="M456.600 300.300H471.500M494.600 300.300H522.800M456.600 300.300V332.900H522.800M471.500 300.300V327.100H494.600V300.300M471.500 305.300H494.600" stroke="#1c1c1c" stroke-width="1.350" fill="none" stroke-linejoin="miter"/><path d="M522.800 295.700V337.500H572.100M522.800 295.700H571.800V297.300H578.400V289.500M575 286.700V297.300" stroke="#1c1c1c" stroke-width="1.350" fill="none" stroke-linejoin="miter"/><path d="M572 311.500V334.400H575.200M575.200 311.500V345.600H649.500V286.700H622.800V316.300H604.800V286.700H575" stroke="#1c1c1c" stroke-width="1.350" fill="none" stroke-linejoin="miter"/><path d="M575 288.200C576.500 287.600 578.400 288 578.400 290" stroke="#1c1c1c" stroke-width="0.900" fill="none"/><path d="M649.500 295.600H723.400V337.500H649.500" stroke="#1c1c1c" stroke-width="1.350" fill="none" stroke-linejoin="miter"/><path d="M689.600 295.600V312.200M698.400 295.600V312.200M689.600 321.300V337.500M698.400 321.300V337.500M671.300 312.200H689.600M698.400 312.200H723.400M671.300 321.300H689.600M698.400 321.300H723.400M671.300 312.200V321.300" stroke="#1c1c1c" stroke-width="1.350" fill="none" stroke-linejoin="miter"/><path d="M689.600 312.200L698.400 321.300M698.400 312.200L689.600 321.300" stroke="#1c1c1c" stroke-width="1.100"/><path d="M671.300 312.200l-1.600 4.500 1.600 4.600" stroke="#1c1c1c" stroke-width="0.800" fill="none"/><path d="M689.600 296.400H698.400M689.600 336.800H698.400" stroke="#f8f8f8" stroke-width="1.400"/><path d="M584.600 290.500C586 292 586.600 296 586.200 299C585 307 578 312 570 312C563 312 557 308 554.800 302C558 306.500 563 308.600 569 308.600C578 308.600 585.200 300 584.600 290.500z" fill="url(#hk)"/><ellipse cx="569.400" cy="293" rx="17.200" ry="19" fill="none" stroke="#222" stroke-width="0.800"/><path d="M537.800 274.200H554.400L557.600 278.400" fill="none" stroke="#1c1c1c" stroke-width="0.850"/><text x="540" y="267.7" font-size="20.2" font-weight="normal" textLength="8.8" lengthAdjust="spacingAndGlyphs" fill="#222">А</text><text x="591" y="256.3" font-size="18.2" font-weight="normal" textLength="7.2" lengthAdjust="spacingAndGlyphs" fill="#222">Б</text><text x="590.6" y="392" font-size="18.2" font-weight="normal" textLength="8.2" lengthAdjust="spacingAndGlyphs" fill="#222">Б</text><text x="745.2" y="278.8" font-size="18.8" font-weight="normal" textLength="26.6" lengthAdjust="spacingAndGlyphs" fill="#222">Б–Б</text><path d="M612.500 257.500V276.500M612.500 362.500V381.300" stroke="#1c1c1c" stroke-width="1.900"/><path d="M590 262.800H604M590 376.500H604" stroke="#2a2a2a" stroke-width="0.700"/><path d="M602 261.400L606.500 262.800L602 264.200zM602 375.100L606.500 376.500L602 377.900z" fill="#1c1c1c"/><path d="M605.500 262.800H612M605.500 376.500H612" stroke="#1c1c1c" stroke-width="1.200"/><path d="M729.600 316.300H790A30.200 30.200 0 0 1 729.600 316.300z" fill="url(#hk)" stroke="#1c1c1c" stroke-width="1.350"/><path d="M410.200 427.200H536.600V530.800H410.200z" fill="none" stroke="#7c7c7c" stroke-width="1.100"/><g clip-path="url(#cdet)"><path d="M426.300 487H487.500V495H511.200V469C511.200 466.600 509.600 465.600 507.600 465.600H498.500V451.900H540V540H448V528C441 525.500 435 521.500 431 516C426 509 425 497 426.300 487z" fill="url(#hg)"/></g><circle cx="471.500" cy="466" r="64.500" fill="none" stroke="#10e818" stroke-width="0.700" clip-path="url(#cview)"/><defs><clipPath id="cview"><rect x="410.200" y="449.500" width="126.400" height="81.400"/></clipPath></defs><path d="M426.300 487C425 497 426 509 431 516C435 521.500 441 525.500 448 528" fill="none" stroke="#10e818" stroke-width="0.700"/><path d="M410.200 486.900H487.500V495H507.800C510 495 511.200 493.600 511.200 491.600V469.400C511.200 467 509.600 465.600 507.400 465.600H498.500M498.500 450V495" fill="none" stroke="#10e818" stroke-width="1.300"/><path d="M407 448.600H539.400V533.200H407z" fill="none" stroke="#10e818" stroke-width="2.600"/><path d="M468.200 448.100H478.400" stroke="#f8f8f8" stroke-width="1.800"/><path d="M468.200 448.900H478.400" stroke="#10e818" stroke-width="0.800"/><text x="467.8" y="443.2" font-size="19.6" font-weight="normal" textLength="8.6" lengthAdjust="spacingAndGlyphs" fill="#10e818">А</text><rect x="536" y="463.800" width="1.600" height="5" fill="#f8a0f0"/><rect x="467.500" y="530" width="6.500" height="1.600" fill="#f8a0f0"/><rect x="409.400" y="486" width="1.600" height="2" fill="#f8a0f0"/><path d="M438.800 531.500V581" stroke="#444" stroke-width="0.800" stroke-dasharray="1.600 1.600"/><path d="M435.600 581.800L441.800 588.600M441.800 581.800L435.600 588.600" stroke="#555" stroke-width="0.800"/></svg></div>
<div style="position:absolute;left:325.80px;top:66.90px;width:684.70px;height:1.00px;background:#6e685c;"></div>
<div style="position:absolute;left:325.80px;top:67.20px;width:1.20px;height:525.00px;background:#7a7468;"></div>
<div style="position:absolute;left:175.50px;top:592.20px;width:835.00px;height:5.20px;background:linear-gradient(90deg,#a4c0f0 0%,#b6cef3 40%,#cbddf7 75%,#dbe7f9 100%);"></div>
<div style="position:absolute;left:193.40px;top:597.40px;width:813.60px;height:38.80px;background:linear-gradient(90deg,#a9c4f0,#c3d7f6 30%,#a9c4f0);"></div>
<div style="position:absolute;left:193.40px;top:597.40px;width:34.00px;height:38.80px;background:linear-gradient(90deg,#dbe7fb 0%,#c3d7f6 40%,#9dbbec 100%);"></div>
<div style="position:absolute;left:227.40px;top:597.60px;width:779.60px;height:21.60px;background:linear-gradient(180deg,#cfe0fa 0%,#bdd3f6 25%,#a9c4f0 55%,#8fb0e8 85%,#86a8e2 100%);border:0.8px solid #8a96aa;border-left:none;border-top-color:#b9c9e6;box-sizing:border-box;"></div>
<div style="position:absolute;left:227.40px;top:619.40px;width:779.60px;height:16.60px;background:linear-gradient(180deg,#dbe7fb 0%,#c6d9f7 35%,#a4c0ee 80%,#8dafe6 100%);"></div>
<svg style="position:absolute;left:193.00px;top:597.00px;overflow:visible;" width="35.00" height="40.00" viewBox="193.00 597.00 35.00 40.00"><rect x="194.600" y="599.00" width="1" height="1" fill="#2c4a92"/><rect x="194.600" y="601.00" width="1" height="1" fill="#2c4a92"/><rect x="194.600" y="603.00" width="1" height="1" fill="#2c4a92"/><rect x="194.600" y="605.00" width="1" height="1" fill="#2c4a92"/><rect x="194.600" y="607.00" width="1" height="1" fill="#2c4a92"/><rect x="194.600" y="609.00" width="1" height="1" fill="#2c4a92"/><rect x="194.600" y="611.00" width="1" height="1" fill="#2c4a92"/><rect x="194.600" y="613.00" width="1" height="1" fill="#2c4a92"/><rect x="194.600" y="615.00" width="1" height="1" fill="#2c4a92"/><rect x="194.600" y="617.00" width="1" height="1" fill="#2c4a92"/><rect x="194.600" y="619.00" width="1" height="1" fill="#2c4a92"/><rect x="194.600" y="621.00" width="1" height="1" fill="#2c4a92"/><rect x="194.600" y="623.00" width="1" height="1" fill="#2c4a92"/><rect x="194.600" y="625.00" width="1" height="1" fill="#2c4a92"/><rect x="194.600" y="627.00" width="1" height="1" fill="#2c4a92"/><rect x="194.600" y="629.00" width="1" height="1" fill="#2c4a92"/><rect x="194.600" y="631.00" width="1" height="1" fill="#2c4a92"/><rect x="197.600" y="598.400" width="13.400" height="13.400" fill="#f8ca84" stroke="#eab060" stroke-width="0.600"/><path d="M208 601.600v3.800h-6.600" stroke="#111" stroke-width="1.300" fill="none"/><path d="M199.200 605.400l3.200-2.200v4.400z" fill="#111"/><path d="M216.400 599.400h4.600l3.200 3.200v4.600l-3.200 3.200h-4.600l-3.200-3.200v-4.600z" fill="#e81020" stroke="#b00810" stroke-width="0.500"/><text x="214.200" y="606.200" font-size="3.400" font-weight="bold" fill="#fff" textLength="9" lengthAdjust="spacingAndGlyphs">STOP</text><path d="M199.400 614.800l1.200-2 1.200 2M203 612.600v2.400M204.200 612.600h1.600M200 620.800h6.600" stroke="#111" stroke-width="0.800" fill="none"/><path d="M209 617.200v2.600h-7" stroke="#111" stroke-width="1.200" fill="none"/><path d="M199.600 619.800l3-2v4z" fill="#111"/><path d="M214.600 614.600h7.200v8h-2.600l1.400 2.200-3.400-2.200h-2.600z" fill="#f4f8ff" stroke="#223" stroke-width="0.800"/><text x="216.300" y="621.400" font-size="6.600" font-weight="bold" fill="#1c2cc8">?</text><path d="M203.200 607v9.600l2.200-2 1.700 3.800 1.500-0.700-1.700-3.700 3-0.200z" fill="#fff" stroke="#111" stroke-width="0.700"/></svg>
<div style="position:absolute;left:239.60px;top:601.40px;width:78.20px;height:12.00px;background:#fcfcfc;border:0.7px solid #9ab0d8;box-sizing:border-box;"></div>
<svg style="position:absolute;left:240.00px;top:601.00px;overflow:visible;" width="78.00" height="13.00" viewBox="240.00 601.00 78.00 13.00"><text x="242" y="611.400" font-size="10.400" fill="#2a34e8" textLength="22.400" lengthAdjust="spacingAndGlyphs">А (4:1)</text></svg>
<div style="position:absolute;left:323.40px;top:603.00px;width:8.80px;height:9.00px;background:linear-gradient(135deg,#fbb85c,#f59a34);border:0.7px solid #8a6a4a;box-sizing:border-box;"></div><svg style="position:absolute;left:323.40px;top:603.00px;overflow:visible;" width="8.80" height="9.00" viewBox="323.40 603.00 8.80 9.00"><path d="M325.40 607.20l1.800 2.600 3-5" stroke="#6a2a5a" stroke-width="1.200" fill="none"/></svg>
<span class="t" style="left:334.00px;top:603.30px;font-size:7.5px;line-height:9.0px;letter-spacing:-0.254px;color:#000;"><u>О</u>бозначение</span>
<div style="position:absolute;left:388.40px;top:603.00px;width:8.80px;height:9.00px;background:linear-gradient(135deg,#fbb85c,#f59a34);border:0.7px solid #8a6a4a;box-sizing:border-box;"></div>
<span class="t" style="left:399.20px;top:603.30px;font-size:7.5px;line-height:9.0px;letter-spacing:-0.154px;color:#000;"><u>Р</u>азвернуто</span>
<div style="position:absolute;left:398.60px;top:602.40px;width:45.80px;height:10.20px;border:0.7px dotted #223;box-sizing:border-box;"></div>
<div style="position:absolute;left:447.20px;top:603.00px;width:8.80px;height:9.00px;background:linear-gradient(135deg,#fbb85c,#f59a34);border:0.7px solid #8a6a4a;box-sizing:border-box;"></div><svg style="position:absolute;left:447.20px;top:603.00px;overflow:visible;" width="8.80" height="9.00" viewBox="447.20 603.00 8.80 9.00"><path d="M449.20 607.20l1.800 2.600 3-5" stroke="#6a2a5a" stroke-width="1.200" fill="none"/></svg>
<span class="t" style="left:458.00px;top:603.30px;font-size:7.5px;line-height:9.0px;letter-spacing:-0.413px;color:#000;"><u>М</u>асштаб</span>
<div style="position:absolute;left:500.60px;top:603.00px;width:8.80px;height:9.00px;background:linear-gradient(135deg,#fbb85c,#f59a34);border:0.7px solid #8a6a4a;box-sizing:border-box;"></div>
<span class="t" style="left:511.60px;top:603.30px;font-size:7.5px;line-height:9.0px;letter-spacing:-0.180px;color:#000;"><u>П</u>овернуто</span>
<div style="position:absolute;left:557.60px;top:603.00px;width:8.80px;height:9.00px;background:#c6d8f4;border:0.7px solid #a9b9d6;box-sizing:border-box;"></div>
<span class="t" style="left:568.80px;top:603.30px;font-size:7.5px;line-height:9.0px;letter-spacing:0.052px;color:#a4b6d6;">У<u>г</u>ол</span>
<div style="position:absolute;left:597.00px;top:603.00px;width:8.80px;height:9.00px;background:linear-gradient(135deg,#fbb85c,#f59a34);border:0.7px solid #8a6a4a;box-sizing:border-box;"></div>
<span class="t" style="left:608.40px;top:603.30px;font-size:7.5px;line-height:9.0px;letter-spacing:-0.424px;color:#000;"><u>Л</u>ист</span>
<div style="position:absolute;left:633.80px;top:603.00px;width:8.80px;height:9.00px;background:linear-gradient(135deg,#fbb85c,#f59a34);border:0.7px solid #8a6a4a;box-sizing:border-box;"></div>
<span class="t" style="left:644.60px;top:603.30px;font-size:7.5px;line-height:9.0px;letter-spacing:-0.404px;color:#000;"><u>З</u>она</span>
<svg style="position:absolute;left:320.00px;top:600.00px;overflow:visible;" width="280.00" height="15.00" viewBox="320.00 600.00 280.00 15.00"><path d="M320.60 602V613" stroke="#6f8fcf" stroke-width="0.900"/><path d="M321.50 602.6V613.6" stroke="#f2f6fe" stroke-width="0.800"/><path d="M497.40 602V613" stroke="#6f8fcf" stroke-width="0.900"/><path d="M498.30 602.6V613.6" stroke="#f2f6fe" stroke-width="0.800"/><path d="M594.00 602V613" stroke="#6f8fcf" stroke-width="0.900"/><path d="M594.90 602.6V613.6" stroke="#f2f6fe" stroke-width="0.800"/></svg>
<div style="position:absolute;left:323.80px;top:619.40px;width:65.00px;height:14.20px;background:linear-gradient(180deg,#d4ecfc,#c3e2fa);border:0.7px solid #8ea5cf;border-top:none;box-sizing:border-box;"></div>
<svg style="position:absolute;left:228.00px;top:620.00px;overflow:visible;" width="162.00" height="16.00" viewBox="228.00 620.00 162.00 16.00"><path d="M231.400 622.400v2.400" stroke="#2a2a9a" stroke-width="1.200"/><rect x="233" y="623" width="5.400" height="5.400" fill="#f4f4f4" stroke="#333" stroke-width="0.700"/><rect x="235.200" y="625.400" width="6.400" height="6.400" fill="#ddd" stroke="#222" stroke-width="0.900"/><rect x="236.800" y="627.800" width="3" height="2.800" fill="#445"/><path d="M288.200 622.600h9.200" stroke="#333" stroke-width="1.400"/><path d="M288.200 625.600h9.200" stroke="#333" stroke-width="1"/><path d="M288.200 628.400h9.200" stroke="#333" stroke-width="0.900" stroke-dasharray="2 1"/><path d="M288.200 631h9.200" stroke="#555" stroke-width="0.900" stroke-dasharray="1 1"/><rect x="326.800" y="627.800" width="9.800" height="3.800" fill="#fdfdfd" stroke="#3a44e8" stroke-width="0.900"/><path d="M284.00 622V633" stroke="#6f8fcf" stroke-width="0.900"/><path d="M284.90 622.6V633.6" stroke="#f2f6fe" stroke-width="0.800"/></svg>
<svg style="position:absolute;left:326.00px;top:620.00px;overflow:visible;" width="12.00" height="8.00" viewBox="326.00 620.00 12.00 8.00"><text x="326.400" y="626.400" font-size="5.800" fill="#111" textLength="10.600" lengthAdjust="spacingAndGlyphs">X-X</text></svg>
<span class="t" style="left:243.60px;top:622.90px;font-size:7.5px;line-height:9.0px;letter-spacing:-0.376px;color:#8a9cc0;">Параметры</span>
<span class="t" style="left:299.80px;top:622.90px;font-size:7.5px;line-height:9.0px;letter-spacing:-0.528px;color:#8a9cc0;">Линии</span>
<span class="t" style="left:338.00px;top:622.90px;font-size:7.5px;line-height:9.0px;letter-spacing:-0.191px;color:#111;">Надпись вида</span>
<div style="position:absolute;left:1007.00px;top:597.40px;width:3.50px;height:39.00px;background:#dbe7f8;"></div>
<div style="position:absolute;left:175.50px;top:636.40px;width:835.00px;height:12.50px;background:#ebe8d8;border-top:0.8px solid #a9a698;box-sizing:border-box;"></div>
<span class="t" style="left:179.40px;top:638.90px;font-size:7.5px;line-height:9.0px;letter-spacing:-0.062px;color:#111;">Создать объект</span>
<svg style="position:absolute;left:940.00px;top:637.00px;overflow:visible;" width="71.00" height="12.00" viewBox="940.00 637.00 71.00 12.00"><path d="M942.800 638.600V647.600M998.800 638.600V647.600" stroke="#c6c2ae" stroke-width="0.800"/><path d="M943.600 638.600V647.600M999.600 638.600V647.600" stroke="#fdfcf6" stroke-width="0.800"/><rect x="1008.00" y="646.00" width="1.200" height="1.200" fill="#b4b09c"/><rect x="1008.00" y="643.80" width="1.200" height="1.200" fill="#b4b09c"/><rect x="1008.00" y="641.60" width="1.200" height="1.200" fill="#b4b09c"/><rect x="1005.80" y="646.00" width="1.200" height="1.200" fill="#b4b09c"/><rect x="1005.80" y="643.80" width="1.200" height="1.200" fill="#b4b09c"/><rect x="1003.60" y="646.00" width="1.200" height="1.200" fill="#b4b09c"/></svg>
<div style="position:absolute;left:175.50px;top:648.90px;width:835.00px;height:17.10px;background:linear-gradient(180deg,#3a84ec 0%,#2a68e2 10%,#2258d8 30%,#2054d2 75%,#1c48c0 100%);"></div>
<div style="position:absolute;left:175.50px;top:648.90px;width:62.10px;height:17.10px;background:linear-gradient(180deg,#5ab05a 0%,#3c963c 18%,#358f35 55%,#2c7a2c 100%);border-radius:0 7px 7px 0;box-shadow:1px 0 1.500px #1a3a8a;"></div>
<svg style="position:absolute;left:180.00px;top:651.00px;overflow:visible;" width="16.00" height="15.00" viewBox="180.00 651.00 16.00 15.00"><g transform="translate(188 658.4) scale(1.22) translate(-187.400 -658.400)"><path d="M183.400 654.400c1.400-0.800 2.800-0.800 4.200 0l-0.800 3.400c-1.400-0.800-2.800-0.800-4.200 0z" fill="#e8502c"/><path d="M188.200 654.600c1.400 0.800 2.800 0.800 4.200 0l-0.800 3.400c-1.400 0.800-2.800 0.800-4.200 0z" fill="#8ac83c"/><path d="M182.400 658.600c1.400-0.800 2.800-0.800 4.200 0l-0.800 3.400c-1.400-0.800-2.800-0.800-4.200 0z" fill="#3c8ce8"/><path d="M187.200 658.800c1.400 0.800 2.800 0.800 4.200 0l-0.800 3.400c-1.400 0.800-2.800 0.800-4.200 0z" fill="#f4c82c"/></g></svg>
<span class="t" style="left:198.40px;top:651.12px;font-size:11.8px;line-height:14.16px;letter-spacing:-0.578px;color:#fff;font-weight:bold;font-style:italic;text-shadow:0.7px 0.7px 0.8px #1a4a1a;">пуск</span>
<div style="position:absolute;left:244.60px;top:651.00px;width:104.20px;height:14.40px;background:linear-gradient(180deg,#1e4ab8,#2454c8 50%,#265acf);border-radius:2px;box-shadow:inset 0.700px 0.700px 1px #163a92;"></div>
<svg style="position:absolute;left:248.00px;top:652.00px;overflow:visible;" width="14.00" height="14.00" viewBox="248.00 652.00 14.00 14.00"><circle cx="254.400" cy="658.600" r="4.800" fill="#5ab4e4" stroke="#cfe4f8" stroke-width="0.700"/><path d="M252 656.400v4.400M253.400 656.400v4.400M255.600 656.200l-1.800 2.200 2 2.400M257.200 656.600v3.800" stroke="#fff" stroke-width="0.800" fill="none"/></svg>
<span class="t" style="left:262.40px;top:654.20px;font-size:7.5px;line-height:9.0px;letter-spacing:-0.159px;color:#fff;">КОМПАС-3D V12 - [А...</span>
<div style="position:absolute;left:351.40px;top:651.00px;width:100.60px;height:14.40px;background:linear-gradient(180deg,#4a8cf4,#3a7cec 40%,#3474e6);border-radius:2px;"></div>
<svg style="position:absolute;left:354.00px;top:652.00px;overflow:visible;" width="12.00" height="14.00" viewBox="354.00 652.00 12.00 14.00"><rect x="355.400" y="653.600" width="9.600" height="10" fill="#2c2ce8" stroke="#1a1ab0" stroke-width="0.600"/><rect x="356.800" y="655.400" width="5.600" height="5.400" fill="none" stroke="#fff" stroke-width="0.900"/><path d="M359.400 658.200h4v4" stroke="#fff" stroke-width="0.900" fill="none"/></svg>
<span class="t" style="left:368.00px;top:654.20px;font-size:7.5px;line-height:9.0px;letter-spacing:-0.420px;color:#fff;">Flashing</span>
<div style="position:absolute;left:915.40px;top:648.90px;width:95.10px;height:17.10px;background:linear-gradient(180deg,#3aa4f2 0%,#1c8ce8 15%,#1688e4 60%,#1478d4 100%);border-left:0.8px solid #0c5cb4;box-sizing:border-box;"></div>
<span class="t" style="left:898.00px;top:654.10px;font-size:7.5px;line-height:9.0px;letter-spacing:-0.597px;color:#e8f0ff;">RL</span>
<svg style="position:absolute;left:908.00px;top:650.00px;overflow:visible;" width="74.00" height="16.00" viewBox="908.00 650.00 74.00 16.00"><circle cx="915.300" cy="658.700" r="5" fill="#3a9cf0" stroke="#bfe0fc" stroke-width="0.800"/><path d="M916.600 656.200l-2.600 2.500 2.600 2.500" stroke="#fff" stroke-width="1.400" fill="none"/><rect x="922.600" y="654" width="9" height="9.600" fill="#2c2ce8" stroke="#1a1ab0" stroke-width="0.500"/><rect x="924.400" y="655.600" width="5" height="4" fill="none" stroke="#fff" stroke-width="0.900"/><path d="M924.400 661.600h5.400" stroke="#fff" stroke-width="0.900"/><rect x="938.00" y="654.200" width="5.600" height="4.600" fill="#4a4e6a" stroke="#c8d0e0" stroke-width="0.600"/><rect x="934.60" y="656.800" width="6" height="4.800" fill="#3a3e5a" stroke="#d0d8e8" stroke-width="0.600"/><path d="M935.60 663h4" stroke="#ccd" stroke-width="1"/><rect x="949.20" y="654.200" width="5.600" height="4.600" fill="#4a4e6a" stroke="#c8d0e0" stroke-width="0.600"/><rect x="945.80" y="656.800" width="6" height="4.800" fill="#3a3e5a" stroke="#d0d8e8" stroke-width="0.600"/><path d="M946.80 663h4" stroke="#ccd" stroke-width="1"/><path d="M958.400 654v9.400M965.800 654l-6 5 6.600 4.600" stroke="#f01818" stroke-width="2" fill="none"/><circle cx="965" cy="662" r="1.800" fill="#222"/><path d="M970.400 655.400h5.600l2.400 2v6h-8z" fill="#f4d8e4" stroke="#c890a8" stroke-width="0.600"/><path d="M972 657.400h4.800M972 659.400h4.800" stroke="#a06a8a" stroke-width="0.700"/><rect x="972.400" y="659.600" width="3.400" height="3.200" fill="#c04a7a"/></svg>
<span class="t" style="left:984.00px;top:654.20px;font-size:7.5px;line-height:9.0px;letter-spacing:-0.156px;color:#fff;">15:12</span>
</div></body></html>
